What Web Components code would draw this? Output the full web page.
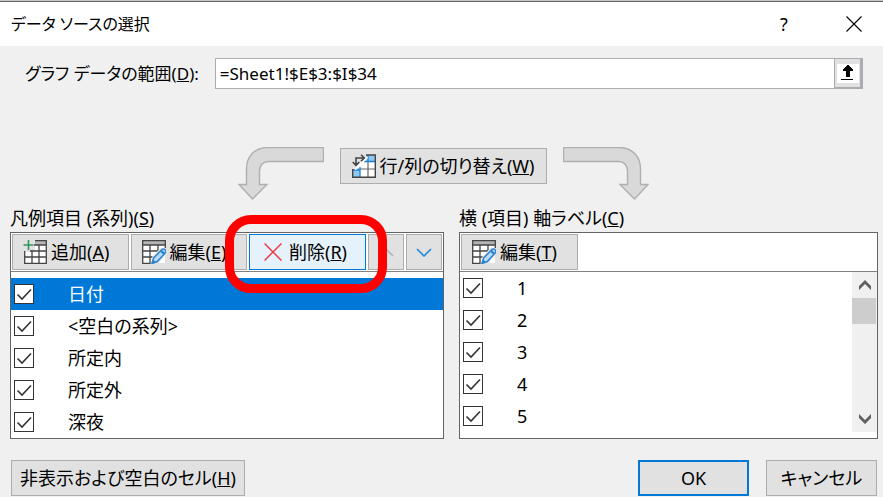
<!DOCTYPE html>
<html lang="ja">
<head>
<meta charset="utf-8">
<title>データ ソースの選択</title>
<style>
body {
  margin: 0;
  background: #f0f0f0;
  color: #000;
  font-family: "Noto Sans", "Noto Sans CJK JP", sans-serif;
  font-size: 18px;
  line-height: 24px;
  font-feature-settings: "palt";
}
</style>
</head>
<body>
<source-dialog></source-dialog>

<template id="ui-icon">
<style>
:host {
  display: block;
  flex: none;
}
svg {
  display: block;
}
</style>
</template>

<template id="push-button">
<style>
:host {
  display: block;
}
button {
  box-sizing: border-box;
  display: flex;
  align-items: center;
  justify-content: center;
  gap: 4px;
  width: 100%;
  height: 36px;
  margin: 0;
  padding: 0 10px;
  border: 1px solid #adadad;
  background: #e1e1e1;
  color: inherit;
  font: inherit;
  font-feature-settings: inherit;
  white-space: nowrap;
}
:host([start]) button {
  justify-content: flex-start;
}
:host([hot]) button {
  gap: 7px;
  padding: 0 14px;
  border-color: #0078d7;
  background: #e5f1fb;
}
:host([default]) button {
  border: 2px solid #0078d7;
}
</style>
<button type="button"><slot></slot></button>
</template>

<template id="title-bar">
<style>
:host {
  display: flex;
  align-items: center;
  height: 44px;
  padding: 0 11px;
  border-top: 1px solid #666;
  background: #fff;
  font-size: 16px;
}
h1 {
  flex: 1;
  margin: 0;
  font: inherit;
}
button {
  display: flex;
  align-items: center;
  justify-content: center;
  width: 36px;
  height: 32px;
  padding: 0;
  border: 0;
  background: none;
  color: inherit;
  font: inherit;
  font-size: 18px;
}
nav {
  display: flex;
  gap: 34px;
}
</style>
<h1><slot></slot></h1>
<nav>
  <button type="button" aria-label="ヘルプ">?</button>
  <button type="button" aria-label="閉じる"><ui-icon name="close"></ui-icon></button>
</nav>
</template>

<template id="range-field">
<style>
:host {
  display: flex;
  align-items: center;
  gap: 16px;
  font-size: 17px;
}
div {
  box-sizing: border-box;
  display: flex;
  flex: 1;
  height: 31px;
  border: 1px solid #abadb3;
  background: #fff;
}
input {
  flex: 1;
  min-width: 0;
  padding: 0 4px;
  border: 0;
  outline: 0;
  background: none;
  color: inherit;
  font: inherit;
}
button {
  width: 28px;
  padding: 4px 2px;
  border: 1px solid #abadb3;
  border-width: 0 2px 1px 1px;
  background: #e1e1e1;
}
</style>
<label for="range"><slot></slot></label>
<div>
  <input id="range" type="text" spellcheck="false">
  <button type="button" aria-label="範囲の選択"><ui-icon name="collapse"></ui-icon></button>
</div>
</template>

<template id="check-row">
<style>
:host {
  display: block;
}
label {
  display: flex;
  align-items: center;
  gap: 34px;
  height: 32px;
  padding: 0 3px;
}
:host([selected]) label {
  background: #0078d7;
  color: #fff;
}
input {
  appearance: none;
  box-sizing: border-box;
  width: 20px;
  height: 20px;
  margin: 0;
  border: 1px solid #333;
  background: #fff;
}
input:checked {
  background: #fff url("data:image/svg+xml,%3Csvg xmlns='http://www.w3.org/2000/svg' viewBox='0 0 18 18'%3E%3Cpath d='M2.5 9.5l4.5 4.5L16 4.5' fill='none' stroke='%23333' stroke-width='1.6'/%3E%3C/svg%3E");
}
</style>
<label><input type="checkbox" checked><span><slot></slot></span></label>
</template>

<template id="scroll-bar">
<style>
:host {
  display: flex;
  flex-direction: column;
  width: 25px;
  height: 160px;
  background: #f0f0f0;
}
button {
  display: flex;
  align-items: center;
  justify-content: center;
  height: 26px;
  padding: 0;
  border: 0;
  background: none;
}
.track {
  flex: 1;
}
.thumb {
  height: 26px;
  margin-right: 1px;
  background: #cdcdcd;
}
</style>
<button type="button" aria-label="上へ"><ui-icon name="scroll-up"></ui-icon></button>
<div class="track"><div class="thumb"></div></div>
<button type="button" aria-label="下へ"><ui-icon name="scroll-down"></ui-icon></button>
</template>

<template id="list-panel">
<style>
:host {
  display: flex;
  flex-direction: column;
  min-width: 0;
}
h2 {
  margin: 0;
  padding-bottom: 2px;
  font: inherit;
}
.frame {
  box-sizing: border-box;
  flex: 1;
  border: 1px solid #646464;
  background: #fff;
}
.bar {
  display: flex;
  gap: 2px;
  padding: 1px;
  border-bottom: 1px solid #828282;
  background: #fff;
}
.list {
  display: flex;
}
.rows {
  flex: 1;
}
:host([inset]) .rows {
  padding-top: 6px;
}
</style>
<h2><slot name="caption"></slot></h2>
<div class="frame">
  <div class="bar"><slot name="tools"></slot></div>
  <div class="list">
    <div class="rows"><slot></slot></div>
    <slot name="scroll"></slot>
  </div>
</div>
</template>

<template id="source-dialog">
<style>
:host {
  display: block;
  border-top: 1px solid #c8c8c8;
}
main {
  padding: 12px 5px 2px 10px;
}
range-field {
  padding: 0 15px;
}
.switch {
  display: flex;
  justify-content: center;
  gap: 16px;
  padding: 58px 2px 6px 0;
}
.switch push-button {
  width: 207px;
  padding-top: 1px;
}
.lists {
  display: grid;
  grid-template-columns: 434fr 419fr;
  gap: 15px;
}
.tool {
  width: 117px;
}
.step {
  width: 36px;
}
.marked {
  position: relative;
}
/* hand-drawn style ring round the delete button */
.ring {
  position: absolute;
  inset: -19px -21px -23px -24px;
  border: 9px solid #f00;
  border-radius: 26px;
  pointer-events: none;
  z-index: 1;
}
footer {
  display: flex;
  gap: 17px;
  padding: 21px 1px 0;
}
footer .hidden {
  width: 234px;
  margin-right: auto;
}
footer .end {
  width: 111px;
}
</style>
<title-bar>データ ソースの選択</title-bar>
<main>
  <range-field value="=Sheet1!$E$3:$I$34">グラフ データの範囲(<u>D</u>):</range-field>
  <div class="switch">
    <ui-icon name="bend-left"></ui-icon>
    <push-button><ui-icon name="swap"></ui-icon><span>行/列の切り替え(<u>W</u>)</span></push-button>
    <ui-icon name="bend-right"></ui-icon>
  </div>
  <div class="lists">
    <list-panel inset>
      <span slot="caption">凡例項目 (系列)(<u>S</u>)</span>
      <push-button class="tool" slot="tools" start><ui-icon name="add"></ui-icon><span>追加(<u>A</u>)</span></push-button>
      <push-button class="tool" slot="tools" start><ui-icon name="edit"></ui-icon><span>編集(<u>E</u>)</span></push-button>
      <div class="marked" slot="tools">
        <push-button class="tool" start hot><ui-icon name="delete"></ui-icon><span>削除(<u>R</u>)</span></push-button>
        <div class="ring"></div>
      </div>
      <push-button class="step" slot="tools" label="上へ移動"><ui-icon name="up"></ui-icon></push-button>
      <push-button class="step" slot="tools" label="下へ移動"><ui-icon name="down"></ui-icon></push-button>
      <check-row selected>日付</check-row>
      <check-row>&lt;空白の系列&gt;</check-row>
      <check-row>所定内</check-row>
      <check-row>所定外</check-row>
      <check-row>深夜</check-row>
    </list-panel>
    <list-panel>
      <span slot="caption">横 (項目) 軸ラベル(<u>C</u>)</span>
      <push-button class="tool" slot="tools" start><ui-icon name="edit"></ui-icon><span>編集(<u>T</u>)</span></push-button>
      <check-row>1</check-row>
      <check-row>2</check-row>
      <check-row>3</check-row>
      <check-row>4</check-row>
      <check-row>5</check-row>
      <scroll-bar slot="scroll"></scroll-bar>
    </list-panel>
  </div>
  <footer>
    <push-button class="hidden"><span>非表示および空白のセル(<u>H</u>)</span></push-button>
    <push-button class="end" default>OK</push-button>
    <push-button class="end">キャンセル</push-button>
  </footer>
</main>
</template>

<script>
const icons = {
  close: [16, 16, `<path d="M.5 .5l15 15M15.5 .5l-15 15" stroke="#000" stroke-width="1.1"/>`],
  collapse: [22, 19, `<path d="M0 0h22v19H0z" fill="#fff"/>
    <path d="M10 1h2v1h1v1h1v1h1v1h1v2h-3v6H9V7H6V5h1V4h1V3h1V2h1zM4 15h12v1H4z" fill="#000"/>`],
  'bend-left': [86, 53, `<path d="M85.5 .5H30C16 .5 8.5 10 8.5 22v15.5H1L14.5 52 29 37.5h-7.5V24c0-6 4-9.500 9-9.500h55z" fill="#d9d9d9" stroke="#b0b0b0" stroke-width="1.4"/>`],
  'bend-right': [86, 53, `<path d="M.5 .5H56C70 .5 77.5 10 77.5 22v15.5H85L71.5 52 57 37.5h7.5V24c0-6-4-9.500-9-9.500H.5z" fill="#d9d9d9" stroke="#b0b0b0" stroke-width="1.4"/>`],
  swap: [24, 24, `<path d="M1 1h22v22H1z" fill="#fff"/>
    <path d="M14 1h9v6h-9zM1 14h7v9H1z" fill="#8cc8f2"/>
    <path d="M8 15h15M16 7v16" stroke="#666" stroke-width="1.2" fill="none"/>
    <path d="M8 13v10M1 16h7M12 7.500h11M16 1v7" stroke="#1e7fd0" stroke-width="1.3" fill="none"/>
    <path d="M13 1h10.300v22.300H.7V12" stroke="#444" stroke-width="1.4" fill="none"/>
    <path d="M0 0h14v3L3 15H0z" fill="#e1e1e1"/>
    <path d="M3 15.500L15.500 3" stroke="#fff" stroke-width="2"/>
    <path d="M4 11V4h8M.7 8L4 11.300 7.300 8M9 .7L12.300 4 9 7.300" stroke="#444" stroke-width="1.6" fill="none"/>`],
  add: [24, 24, `<path d="M2 12h10V5h11v18H2z" fill="#fff"/>
    <path d="M12 1h11v4H12z" fill="#b5b5b5"/>
    <path d="M12 .7h11.300v22.600H1.700V11M9 11v12M16 5v18M11 5h12M7 11h16M2 17h21" stroke="#444" stroke-width="1.3" fill="none"/>
    <path d="M5.500 0v10M.5 5h10" stroke="#35965c" stroke-width="1.6"/>`],
  edit: [24, 24, `<path d="M1 1h22v22H1z" fill="#fff"/>
    <path d="M1 1h22v4H1z" fill="#b5b5b5"/>
    <path d="M23.300 9V.7H.7v22.600H10M1 5h22M1 11h19M1 17h13M8 5v18M16 5v10" stroke="#444" stroke-width="1.3" fill="none"/>
    <path d="M8.500 24l2-7.500 8-8.500H24v6l-8 10z" fill="#e1e1e1"/>
    <path d="M10 23.500l1.700-5.500 8-8.200a2.300 2.300 0 0 1 3.400 3.200l-7.800 8.500z" fill="#b9dcf7" stroke="#2a84d2" stroke-width="1.5"/>
    <path d="M9.500 24l1.500-4.500 3.200 2.800zM17.800 11.300l3.700 3.400 1.500-1.600-3.600-3.400z" fill="#2a84d2"/>`],
  delete: [18, 18, `<path d="M.5 .5l17 17M17.500 .5l-17 17" stroke="#e8404c" stroke-width="1.5"/>`],
  up: [16, 9, `<path d="M1 8l7-7 7 7" fill="none" stroke="#b0b0b0" stroke-width="1.5"/>`],
  down: [16, 9, `<path d="M1 1l7 7 7-7" fill="none" stroke="#1e88dc" stroke-width="1.6"/>`],
  'scroll-up': [12, 10, `<path d="M0 6l6-6 6 6v4L6 4 0 10z" fill="#606060"/>`],
  'scroll-down': [12, 10, `<path d="M0 4l6 6 6-6V0L6 6 0 0z" fill="#606060"/>`]
};

class BaseElement extends HTMLElement {
  constructor() {
    super();
    this.attachShadow({ mode: 'open' });
    const template = document.getElementById(this.localName);
    this.shadowRoot.appendChild(template.content.cloneNode(true));
  }
}

class UiIcon extends BaseElement {
  connectedCallback() {
    if (this.shadowRoot.querySelector('svg')) return;
    const [width, height, shapes] = icons[this.getAttribute('name')];
    this.shadowRoot.innerHTML += `<svg width="${width}" height="${height}" viewBox="0 0 ${width} ${height}" aria-hidden="true">${shapes}</svg>`;
  }
}

class PushButton extends BaseElement {
  connectedCallback() {
    if (this.hasAttribute('label')) {
      this.shadowRoot.querySelector('button').setAttribute('aria-label', this.getAttribute('label'));
    }
  }
}

class RangeField extends BaseElement {
  connectedCallback() {
    this.shadowRoot.querySelector('input').value = this.getAttribute('value');
  }
}

customElements.define('ui-icon', UiIcon);
customElements.define('push-button', PushButton);
customElements.define('range-field', RangeField);
customElements.define('title-bar', class extends BaseElement {});
customElements.define('check-row', class extends BaseElement {});
customElements.define('scroll-bar', class extends BaseElement {});
customElements.define('list-panel', class extends BaseElement {});
customElements.define('source-dialog', class extends BaseElement {});
</script>
</body>
</html>
